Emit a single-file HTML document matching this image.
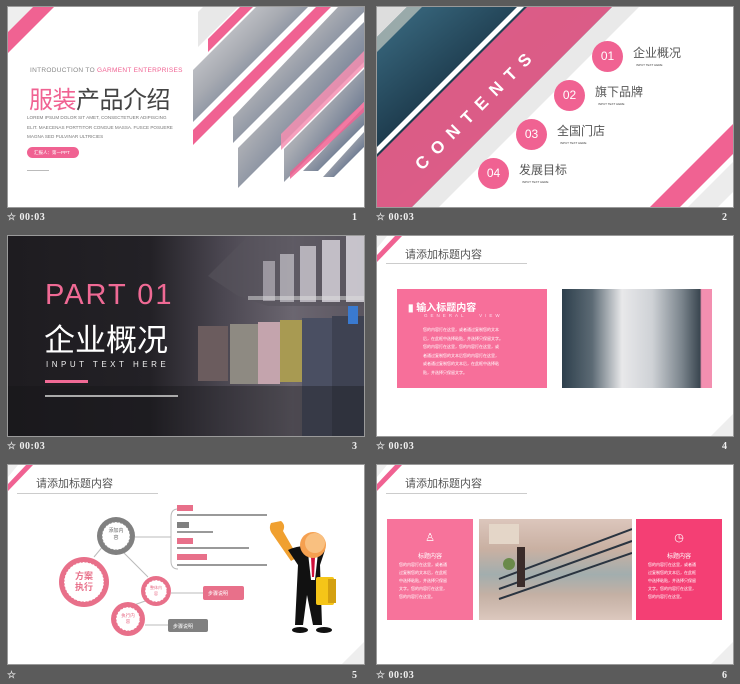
<!DOCTYPE html>
<html><head><meta charset="utf-8"><style>
*{margin:0;padding:0;box-sizing:border-box}
body{width:740px;height:684px;background:#5b5b5b;position:relative;overflow:hidden;font-family:"Liberation Sans","Noto Sans CJK SC",sans-serif}
.s{position:absolute;width:356px;height:200px;background:#fff;overflow:hidden;outline:1px solid #9a9a9a}
.a{position:absolute}
.lb{position:absolute;color:#f0f0f0;font:bold 10px "Liberation Serif","DejaVu Serif",serif;letter-spacing:0.5px}
.st{font-size:10px;color:#ddd}
.t{position:absolute;font-size:11px;color:#555;white-space:nowrap}
.tl{position:absolute;height:1px;background:#ccc}
.tiny{position:absolute;font-size:4px;color:#fff;line-height:8.5px;white-space:nowrap}
</style></head><body>

<!-- Slide 1 -->
<div class="s" style="left:8px;top:7px">
<svg class="a" width="356" height="200" style="left:0;top:0">
<defs><linearGradient id="p1" x1="0" y1="0" x2="1" y2="1"><stop offset="0" stop-color="#e2e2e4"/><stop offset=".4" stop-color="#a8abb2"/><stop offset=".7" stop-color="#6a7890"/><stop offset="1" stop-color="#d8dce2"/></linearGradient></defs>
<polygon points="0,0 25,0 0,25" fill="#eee"/>
<polygon points="25,0 46,0 0,46 0,25" fill="#f06292"/>
<polygon points="195,0 230,0 190,40 190,5" fill="#e8e8e8"/>
<polygon points="232,0 245,0 200,45 200,32" fill="#f06292"/>
<polygon points="248,0 300,0 185,115 185,63" fill="url(#p1)"/>
<polygon points="308,0 323,0 185,138 185,123" fill="#f06292"/>
<polygon points="330,0 356,0 356,5 225,136 225,110" fill="url(#p1)"/>
<polygon points="356,15 356,55 230,181 230,141" fill="url(#p1)"/>
<polygon points="356,62 356,95 276,175 276,142" fill="url(#p1)"/>
<polygon points="356,100 356,118 310,164 295,164" fill="url(#p1)"/>
<polygon points="356,125 356,140 326,170 315,170" fill="url(#p1)"/>
<polygon points="350,50 356,44 356,60 273,143 273,127" fill="#f48fb1" opacity=".85"/>
<polygon points="356,95 356,105 282,172 282,165" fill="#f06292" opacity=".85"/>
</svg>
<div class="a" style="left:22px;top:60px;font-size:6.5px;color:#888;white-space:nowrap;letter-spacing:.3px">INTRODUCTION TO <span style="color:#f06292">GARMENT ENTERPRISES</span></div>
<div class="a" style="left:21px;top:73px;font-size:24px;color:#444;white-space:nowrap;letter-spacing:-0.5px"><span style="color:#f06292">服装</span>产品介绍</div>
<div class="a" style="left:19px;top:106px;font-size:4.6px;color:#777;line-height:9.5px;white-space:nowrap">LOREM IPSUM DOLOR SIT AMET, CONSECTETUER ADIPISCING<br>ELIT. MAECENAS PORTTITOR CONGUE MASSA. FUSCE POSUERE<br>MAGNA SED PULVINAR ULTRICIES</div>
<div class="a" style="left:19px;top:140px;width:52px;height:11px;border-radius:6px;background:#f06292;font-size:4.5px;color:#fff;line-height:11px;padding-left:7px">汇报人：第一PPT</div>
<div class="a" style="left:19px;top:163px;width:22px;height:1px;background:#bbb"></div>
</div>
<div class="lb" style="left:7px;top:212px"><span class="st">☆</span> 00:03</div>
<div class="lb" style="left:352px;top:212px">1</div>

<!-- Slide 2 -->
<div class="s" style="left:377px;top:7px">
<svg class="a" width="356" height="200" style="left:0;top:0">
<defs><linearGradient id="p2" x1="0" y1="0" x2="1" y2="1"><stop offset="0" stop-color="#3d6f86"/><stop offset=".35" stop-color="#1e3c4e"/><stop offset=".6" stop-color="#2c4450"/><stop offset=".8" stop-color="#8a7a6a"/><stop offset="1" stop-color="#b8a58c"/></linearGradient></defs>
<polygon points="0,0 250,0 50,200 0,200" fill="url(#p2)"/>
<polygon points="0,0 30,0 0,30" fill="#ddd"/>
<polygon points="30,0 45,0 0,45 0,30" fill="#9aa"/>
<polygon points="140,0 147,0 0,147 0,140" fill="#fff"/>
<polygon points="150,0 235,0 35,200 0,200 0,150" fill="#ef5f8d" opacity=".9"/>
<polygon points="235,0 262,0 62,200 35,200" fill="#e9e9e9"/>
<polygon points="356,117 356,147 303,200 273,200" fill="#f06292"/>
<polygon points="356,155 356,185 341,200 311,200" fill="#ececec"/>
</svg>
<div class="a" style="left:15px;top:92px;width:170px;transform:rotate(-45deg);color:#fff;font-size:17px;font-weight:bold;letter-spacing:9px;text-align:center">CONTENTS</div>
<div class="a" style="left:215px;top:34px;width:31px;height:31px;border-radius:50%;background:#f06292;color:#fff;font-size:12px;line-height:31px;text-align:center">01</div>
<div class="a" style="left:177px;top:73px;width:31px;height:31px;border-radius:50%;background:#f06292;color:#fff;font-size:12px;line-height:31px;text-align:center">02</div>
<div class="a" style="left:139px;top:112px;width:31px;height:31px;border-radius:50%;background:#f06292;color:#fff;font-size:12px;line-height:31px;text-align:center">03</div>
<div class="a" style="left:101px;top:151px;width:31px;height:31px;border-radius:50%;background:#f06292;color:#fff;font-size:12px;line-height:31px;text-align:center">04</div>
<div class="t" style="left:256px;top:37px;font-size:12px">企业概况</div><div class="a" style="left:259px;top:56px;font-size:3px;color:#444">INPUT TEXT HERE</div>
<div class="t" style="left:218px;top:76px;font-size:12px">旗下品牌</div><div class="a" style="left:221px;top:95px;font-size:3px;color:#444">INPUT TEXT HERE</div>
<div class="t" style="left:180px;top:115px;font-size:12px">全国门店</div><div class="a" style="left:183px;top:134px;font-size:3px;color:#444">INPUT TEXT HERE</div>
<div class="t" style="left:142px;top:154px;font-size:12px">发展目标</div><div class="a" style="left:145px;top:173px;font-size:3px;color:#444">INPUT TEXT HERE</div>
</div>
<div class="lb" style="left:376px;top:212px"><span class="st">☆</span> 00:03</div>
<div class="lb" style="left:722px;top:212px">2</div>

<!-- Slide 3 -->
<div class="s" style="left:8px;top:236px;background:linear-gradient(90deg,#1e1c20 0%,#232126 40%,#4a4650 60%,#6b6670 80%,#5a5560 100%)">
<svg class="a" width="356" height="200" style="left:0;top:0">
<polygon points="200,40 240,0 356,0 356,70 260,70 230,60" fill="#57535c" opacity=".6"/>
<rect x="255" y="25" width="12" height="40" fill="#b8b4bc" opacity=".7"/>
<rect x="272" y="18" width="14" height="48" fill="#c8c4cc" opacity=".7"/>
<rect x="292" y="10" width="16" height="56" fill="#d4d0d8" opacity=".75"/>
<rect x="314" y="4" width="18" height="62" fill="#dcd8e0" opacity=".8"/>
<rect x="338" y="0" width="18" height="66" fill="#e2dee6" opacity=".8"/>
<rect x="190" y="90" width="30" height="55" fill="#6b5c5e"/>
<rect x="222" y="88" width="28" height="60" fill="#8e8a82"/>
<rect x="250" y="86" width="22" height="62" fill="#c4a4ad"/>
<rect x="272" y="84" width="22" height="62" fill="#a89a52"/>
<rect x="294" y="82" width="30" height="118" fill="#4a4f62"/>
<rect x="324" y="80" width="32" height="120" fill="#3e4252"/>
<rect x="240" y="60" width="116" height="4" fill="#ddd" opacity=".5"/>
<rect x="340" y="70" width="10" height="18" fill="#3a7ad0"/>
<rect x="0" y="150" width="356" height="50" fill="#151418" opacity=".35"/>
</svg>
<div class="a" style="left:37px;top:43px;font-size:29px;color:#f06a95;letter-spacing:2px;white-space:nowrap">PART 01</div>
<div class="a" style="left:36px;top:79px;font-size:31px;color:#fff;white-space:nowrap">企业概况</div>
<div class="a" style="left:38px;top:124px;font-size:8px;color:#eee;letter-spacing:3.5px;white-space:nowrap">INPUT TEXT HERE</div>
<div class="a" style="left:37px;top:144px;width:43px;height:3px;background:#f06a95"></div>
<div class="a" style="left:37px;top:159px;width:133px;height:2px;background:#aaa"></div>
</div>
<div class="lb" style="left:7px;top:441px"><span class="st">☆</span> 00:03</div>
<div class="lb" style="left:352px;top:441px">3</div>

<!-- Slide 4 -->
<div class="s" style="left:377px;top:236px">
<svg class="a" width="30" height="30" style="left:0;top:0"><polygon points="0,0 10,0 0,12" fill="#eee"/><polygon points="18,0 25,0 0,26 0,19" fill="#f06292"/></svg>
<div class="t" style="left:28px;top:10px">请添加标题内容</div>
<div class="tl" style="left:9px;top:27px;width:141px"></div>
<div class="a" style="left:20px;top:53px;width:150px;height:99px;background:#f76f9a"></div>
<div class="a" style="left:31px;top:63px;color:#fff;font-size:10px;font-weight:bold;white-space:nowrap">&#9646; 输入标题内容</div>
<div class="a" style="left:47px;top:77px;color:#fde;font-size:4.5px;letter-spacing:3px;white-space:nowrap">GENERAL &nbsp; VIEW</div>
<div class="tiny" style="left:46px;top:90px">您的内容打在这里，或者通过复制您的文本<br>后，在此框中选择粘贴，并选择只保留文字。<br>您的内容打在这里，您的内容打在这里，或<br>者通过复制您的文本后您的内容打在这里，<br>或者通过复制您的文本后，在此框中选择粘<br>贴，并选择只保留文字。</div>
<div class="a" style="left:185px;top:53px;width:150px;height:99px;background:linear-gradient(90deg,#2d3f4c 0%,#5c6a74 20%,#e8e8ea 40%,#cfd2d6 60%,#7a848c 80%,#3a4650 92%,#f38fb0 93%,#f38fb0 100%)"></div>
<svg class="a" width="30" height="30" style="left:326px;top:170px"><polygon points="30,8 30,30 8,30" fill="#eee"/></svg>
</div>
<div class="lb" style="left:376px;top:441px"><span class="st">☆</span> 00:03</div>
<div class="lb" style="left:722px;top:441px">4</div>

<!-- Slide 5 -->
<div class="s" style="left:8px;top:465px;height:199px">
<svg class="a" width="30" height="30" style="left:0;top:0"><polygon points="0,0 10,0 0,12" fill="#eee"/><polygon points="18,0 25,0 0,26 0,19" fill="#f06292"/></svg>
<div class="t" style="left:28px;top:10px">请添加标题内容</div>
<div class="tl" style="left:9px;top:28px;width:141px"></div>
<svg class="a" width="356" height="199" style="left:0;top:0">
<g stroke="#bbb" stroke-width="1" fill="none">
<line x1="86" y1="92" x2="96" y2="80"/><line x1="116" y1="88" x2="140" y2="112"/><line x1="126" y1="140" x2="140" y2="135"/>
<line x1="127" y1="72" x2="163" y2="72"/><path d="M170,44 Q163,44 163,52 L163,96 Q163,104 170,104"/>
<line x1="163" y1="128" x2="195" y2="128"/><line x1="137" y1="160" x2="160" y2="160"/>
</g>
<circle cx="76" cy="117" r="25" fill="#e8708a"/><circle cx="76" cy="117" r="20" fill="#fff" stroke="#e8708a" stroke-dasharray="2 1.5" stroke-width="1"/>
<circle cx="108" cy="71" r="19" fill="#808080"/><circle cx="108" cy="71" r="14" fill="#fff" stroke="#888" stroke-dasharray="2 1.5"/>
<circle cx="148" cy="126" r="15" fill="#e8708a"/><circle cx="148" cy="126" r="11" fill="#fff" stroke="#e8708a" stroke-dasharray="2 1.5"/>
<circle cx="120" cy="154" r="17" fill="#e8708a"/><circle cx="120" cy="154" r="12" fill="#fff" stroke="#e8708a" stroke-dasharray="2 1.5"/>
<rect x="169" y="40" width="16" height="6" fill="#e8708a"/><rect x="169" y="57" width="12" height="6" fill="#808080"/><rect x="169" y="73" width="16" height="6" fill="#e8708a"/><rect x="169" y="89" width="30" height="6" fill="#e8708a"/>
<g fill="#999"><rect x="169" y="49" width="90" height="2"/><rect x="169" y="66" width="36" height="2"/><rect x="169" y="82" width="72" height="2"/><rect x="169" y="99" width="90" height="2"/></g>
<rect x="195" y="121" width="41" height="14" rx="2" fill="#e8708a"/><rect x="160" y="154" width="40" height="13" rx="2" fill="#808080"/>
<!-- man -->
<path d="M263,58 q-3,6 2,12 l18,26 l7,-4 l-15,-26 q3,-6 -2,-10 z" fill="#f0a030"/>
<path d="M280,85 l10,15 l-3,60 l8,0 l4,-30 l6,30 l9,0 l-2,-60 l5,-15 q-20,-8 -37,0 z" fill="#111"/>
<polygon points="300,88 310,88 307,115 303,115" fill="#fff"/><polygon points="303,92 307,92 306,112 304,112" fill="#d0103a"/>
<rect x="308" y="112" width="18" height="28" rx="2" fill="#f5c518"/><rect x="320" y="114" width="8" height="24" fill="#d4a010"/>
<ellipse cx="292" cy="165" rx="8" ry="3" fill="#111"/><ellipse cx="316" cy="165" rx="8" ry="3" fill="#111"/>
<circle cx="305" cy="80" r="13" fill="#f5a050"/><circle cx="307" cy="78" r="10" fill="#f9c080"/>
</svg>
<div class="a" style="left:64px;top:106px;font-size:9px;color:#e8708a;line-height:11px;text-align:center;width:24px;font-weight:bold">方案执行</div>
<div class="a" style="left:100px;top:63px;font-size:5px;color:#666;line-height:7px;width:16px;text-align:center">添加内容</div>
<div class="a" style="left:142px;top:120px;font-size:4px;color:#e8708a;line-height:6px;width:12px;text-align:center">整体内容</div>
<div class="a" style="left:113px;top:148px;font-size:4.5px;color:#e8708a;line-height:6px;width:14px;text-align:center">执行内容</div>
<div class="a" style="left:200px;top:125px;font-size:5px;color:#fff">步骤说明</div>
<div class="a" style="left:165px;top:158px;font-size:5px;color:#fff">步骤说明</div>
<svg class="a" width="30" height="30" style="left:326px;top:169px"><polygon points="30,8 30,30 8,30" fill="#eee"/></svg>
</div>
<div class="lb" style="left:7px;top:670px"><span class="st">☆</span></div>
<div class="lb" style="left:352px;top:670px">5</div>

<!-- Slide 6 -->
<div class="s" style="left:377px;top:465px;height:199px">
<svg class="a" width="30" height="30" style="left:0;top:0"><polygon points="0,0 10,0 0,12" fill="#eee"/><polygon points="18,0 25,0 0,26 0,19" fill="#f06292"/></svg>
<div class="t" style="left:28px;top:10px">请添加标题内容</div>
<div class="tl" style="left:9px;top:28px;width:141px"></div>
<div class="a" style="left:10px;top:54px;width:86px;height:101px;background:#f7739b"></div>
<div class="a" style="left:102px;top:54px;width:153px;height:101px;background:linear-gradient(180deg,#dcc6bc 0%,#c9b0a2 30%,#a2aeae 55%,#c4b0a4 75%,#dcc8be 100%)"></div>
<svg class="a" width="153" height="101" style="left:102px;top:54px"><g stroke="#2a3440" stroke-width="2"><line x1="20" y1="60" x2="153" y2="10"/><line x1="20" y1="70" x2="153" y2="22"/><line x1="20" y1="80" x2="153" y2="34"/></g><rect x="38" y="28" width="8" height="40" fill="#3a2c2a"/><rect x="10" y="5" width="30" height="20" fill="#e4d6c8"/><circle cx="30" cy="45" r="6" fill="#6a8a4a"/></svg>
<div class="a" style="left:259px;top:54px;width:86px;height:101px;background:#f43f74"></div>
<div class="a" style="left:10px;top:66px;width:86px;text-align:center;color:#fff;font-size:11px">♙</div>
<div class="a" style="left:259px;top:66px;width:86px;text-align:center;color:#fff;font-size:11px">◷</div>
<div class="a" style="left:10px;top:86px;width:86px;text-align:center;color:#fff;font-size:6px">标题内容</div>
<div class="a" style="left:259px;top:86px;width:86px;text-align:center;color:#fff;font-size:6px">标题内容</div>
<div class="tiny" style="left:22px;top:96px;line-height:8px">您的内容打在这里，或者通<br>过复制您的文本后，在此框<br>中选择粘贴，并选择只保留<br>文字。您的内容打在这里，<br>您的内容打在这里。</div>
<div class="tiny" style="left:271px;top:96px;line-height:8px">您的内容打在这里，或者通<br>过复制您的文本后，在此框<br>中选择粘贴，并选择只保留<br>文字。您的内容打在这里，<br>您的内容打在这里。</div>
<svg class="a" width="30" height="30" style="left:326px;top:169px"><polygon points="30,8 30,30 8,30" fill="#eee"/></svg>
</div>
<div class="lb" style="left:376px;top:670px"><span class="st">☆</span> 00:03</div>
<div class="lb" style="left:722px;top:670px">6</div>
</body></html>
